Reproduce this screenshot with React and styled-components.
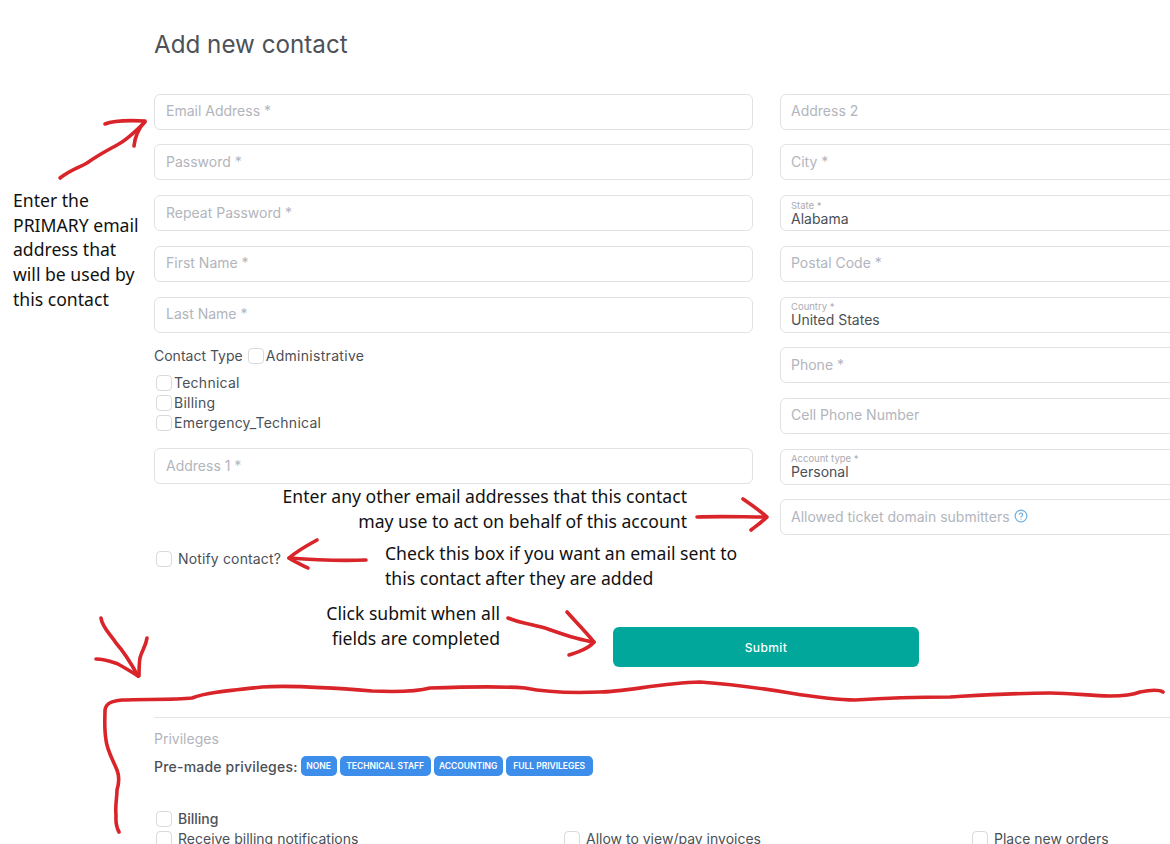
import React from 'react';
import styled, { createGlobalStyle } from 'styled-components';

const GlobalStyle = createGlobalStyle`
  html, body {
    margin: 0;
    padding: 0;
    overflow: hidden;
    background: #fff;
  }
`;

const Page = styled.div`
  position: relative;
  width: 1170px;
  height: 844px;
  overflow: hidden;
  font-family: Inter, Roboto, sans-serif;
  color: #4b5056;
`;

const Content = styled.div`
  width: 1224px;
  margin-left: 154px;
  padding-top: 30px;
`;

const Heading = styled.h1`
  margin: 0 0 33.8px;
  height: 30px;
  font-size: 24.2px;
  line-height: 30px;
  font-weight: 400;
  color: #4d5259;
`;

const FormGrid = styled.div`
  display: grid;
  grid-template-columns: 599px 599px;
  column-gap: 27px;
`;

const Column = styled.div`
  display: flex;
  flex-direction: column;
  gap: 14.7px;
`;

const Field = styled.div`
  box-sizing: border-box;
  height: 36px;
  padding: 0 10px 2px;
  border: 1px solid #e1e2e5;
  border-radius: 6px;
  display: flex;
  align-items: center;
  gap: 4px;
  font-size: 14px;
  color: #b2b5bc;
`;

const LeftField = styled(Field)`
  padding-left: 11px;
`;

const SelectField = styled(Field)`
  flex-direction: column;
  align-items: flex-start;
  justify-content: center;
  gap: 0;
  padding-bottom: 0;
`;

const SelectLabel = styled.span`
  font-size: 9.5px;
  line-height: 11px;
  color: #a9acb3;
`;

const SelectValue = styled.span`
  font-size: 14px;
  line-height: 16px;
  color: #4b5056;
`;

const HelpIcon = styled.svg`
  width: 14px;
  height: 14px;
  color: #6fb0e0;
`;

const Box = styled.span`
  box-sizing: border-box;
  flex: none;
  width: 16px;
  height: 16px;
  border: 1px solid #d9dadd;
  border-radius: 4px;
  background: #fff;
`;

const CheckRow = styled.label`
  display: flex;
  align-items: center;
  height: 20px;
  font-size: 14px;
  line-height: 20px;
  gap: 2px;
`;

const ContactTypes = styled.div`
  height: 88px;
  margin-top: -1.5px;
`;

const TypeTitle = styled.div`
  display: flex;
  align-items: center;
  gap: 2px;
  height: 20px;
  margin-bottom: 7px;
  font-size: 14px;
`;

const TypeTitleText = styled.span`
  margin-right: 3px;
`;

const AdminLabel = styled.span`
  letter-spacing: 0.3px;
`;

const TypeList = styled.div`
  padding-left: 2px;
  letter-spacing: 0.25px;
`;

const NotifyRow = styled(CheckRow)`
  margin-top: 50px;
  padding-left: 2px;
  gap: 6px;
  letter-spacing: 0.15px;
`;

const Actions = styled.div`
  display: flex;
  justify-content: center;
  margin-top: 58px;
`;

const SubmitButton = styled.button`
  width: 306px;
  height: 40px;
  border: 0;
  border-radius: 6px;
  background: #00a79a;
  color: #fff;
  font-family: inherit;
  font-size: 12px;
  font-weight: 500;
  letter-spacing: 0.4px;
`;

const Divider = styled.hr`
  height: 1px;
  margin: 50px 0 0;
  border: 0;
  background: #e4e5e7;
`;

const SectionLabel = styled.div`
  margin-top: 11px;
  height: 20px;
  font-size: 14px;
  line-height: 20px;
  color: #b2b5bc;
`;

const PresetRow = styled.div`
  display: flex;
  align-items: center;
  gap: 3px;
  height: 20px;
  margin-top: 7px;
`;

const PresetLabel = styled.span`
  font-size: 14px;
  font-weight: 500;
  letter-spacing: 0.2px;
  color: #4b5056;
`;

const Badge = styled.span`
  box-sizing: border-box;
  width: ${p => p.$w}px;
  height: 20px;
  border-radius: 5px;
  background: #3d8eea;
  color: #fff;
  font-size: 8.5px;
  line-height: 20px;
  font-weight: 600;
  text-align: center;
  white-space: nowrap;
`;

const PermGroupTitle = styled(CheckRow)`
  margin-top: 33px;
  padding-left: 2px;
  gap: 6px;
  font-weight: 500;
`;

const PermGrid = styled.div`
  display: grid;
  grid-template-columns: repeat(3, 408px);
  padding-left: 2px;
`;

const PermItem = styled(CheckRow)`
  gap: 6px;
`;

const Note = styled.div`
  position: absolute;
  left: ${p => p.$x}px;
  top: ${p => p.$y}px;
  width: ${p => p.$w}px;
  text-align: ${p => p.$align || 'left'};
  font-family: 'Noto Sans', 'Open Sans', sans-serif;
  font-size: 17.6px;
  line-height: 24.7px;
  color: #111;
  white-space: pre-line;
`;

const Scribbles = styled.svg`
  position: absolute;
  left: 0;
  top: 0;
  width: 1170px;
  height: 844px;
  pointer-events: none;
  fill: none;
  stroke: #d9242a;
  stroke-width: 3.6;
  stroke-linecap: round;
  stroke-linejoin: round;
`;

const leftFields = ['Email Address *', 'Password *', 'Repeat Password *', 'First Name *', 'Last Name *'];
const contactTypes = ['Technical', 'Billing', 'Emergency_Technical'];
const presets = [
  ['NONE', 36],
  ['TECHNICAL STAFF', 91],
  ['ACCOUNTING', 69],
  ['FULL PRIVILEGES', 87],
];
const billingPerms = ['Receive billing notifications', 'Allow to view/pay invoices', 'Place new orders'];

const strokes = [
  'M60 178 C70 170 78 168 87 163 C98 155 108 150 117 145 C125 141 135 132 145 122',
  'M105 124 C112 121 125 120 145 121 C139 128 135 136 134 146',
  'M366 560 C340 561 315 560 289 558',
  'M317 540 C306 546 297 551 289 558 C295 562 302 565 308 568',
  'M697 517 C720 516 745 517 766 517',
  'M743 499 C752 505 760 511 767 517 C762 522 756 526 751 530',
  'M508 618 C520 623 535 625 548 629 C562 634 578 640 594 642',
  'M567 612 C575 621 586 632 594 642 C588 649 578 652 569 655',
  'M101 618 C102 627 110 634 116 643 C124 652 132 665 138 676',
  'M96 659 C105 659 112 662 118 664 C125 668 132 672 138 676',
  'M147 638 C146 646 142 650 140 658 C139 664 139 670 139 676',
  'M119 832 C115 825 116 820 116 815 C115 805 117 798 117 790 C120 780 119 775 117 770 C112 758 107 750 106 740 C104 728 105 718 105 710 C106 703 112 701 122 700 C140 699 175 700 192 698 C205 693 225 691 262 687 C290 685 335 688 372 691 C395 692 415 692 430 688 C460 687 500 686 525 688 C545 692 575 693 600 692 C625 692 660 683 700 682 C730 684 760 688 790 693 C815 697 835 700 855 700 C885 698 920 697 950 697 C985 695 1015 693 1050 693 C1075 693 1090 696 1110 696 C1125 696 1135 694 1140 692 C1150 690 1158 689 1163 692',
];

function App() {
  return (
    <Page>
      <GlobalStyle />
      <Content>
        <Heading>Add new contact</Heading>
        <FormGrid>
          <Column>
            {leftFields.map(name => (
              <LeftField key={name}>{name}</LeftField>
            ))}
            <ContactTypes>
              <TypeTitle>
                <TypeTitleText>Contact Type</TypeTitleText>
                <Box />
                <AdminLabel>Administrative</AdminLabel>
              </TypeTitle>
              <TypeList>
                {contactTypes.map(name => (
                  <CheckRow key={name}>
                    <Box />
                    {name}
                  </CheckRow>
                ))}
              </TypeList>
            </ContactTypes>
            <LeftField>Address 1 *</LeftField>
            <NotifyRow>
              <Box />
              Notify contact?
            </NotifyRow>
          </Column>
          <Column>
            <Field>Address 2</Field>
            <Field>City *</Field>
            <SelectField>
              <SelectLabel>State *</SelectLabel>
              <SelectValue>Alabama</SelectValue>
            </SelectField>
            <Field>Postal Code *</Field>
            <SelectField>
              <SelectLabel>Country *</SelectLabel>
              <SelectValue>United States</SelectValue>
            </SelectField>
            <Field>Phone *</Field>
            <Field>Cell Phone Number</Field>
            <SelectField>
              <SelectLabel>Account type *</SelectLabel>
              <SelectValue>Personal</SelectValue>
            </SelectField>
            <Field>
              Allowed ticket domain submitters
              <HelpIcon viewBox="0 0 24 24" fill="none" stroke="currentColor" strokeWidth="2">
                <circle cx="12" cy="12" r="10" />
                <path d="M9 9a3 3 0 0 1 5.8 1c0 2-2.8 2.4-2.8 4" strokeLinecap="round" />
                <path d="M12 17.5h.01" strokeLinecap="round" />
              </HelpIcon>
            </Field>
          </Column>
        </FormGrid>
        <Actions>
          <SubmitButton>Submit</SubmitButton>
        </Actions>
        <Divider />
        <SectionLabel>Privileges</SectionLabel>
        <PresetRow>
          <PresetLabel>Pre-made privileges:</PresetLabel>
          {presets.map(([name, w]) => (
            <Badge key={name} $w={w}>{name}</Badge>
          ))}
        </PresetRow>
        <PermGroupTitle>
          <Box />
          Billing
        </PermGroupTitle>
        <PermGrid>
          {billingPerms.map(name => (
            <PermItem key={name}>
              <Box />
              {name}
            </PermItem>
          ))}
        </PermGrid>
      </Content>

      <Note $x={13} $y={188} $w={135}>
        {'Enter the\nPRIMARY email\naddress that\nwill be used by\nthis contact'}
      </Note>
      <Note $x={240} $y={484} $w={447} $align="right">
        {'Enter any other email addresses that this contact\nmay use to act on behalf of this account'}
      </Note>
      <Note $x={385} $y={541} $w={400}>
        {'Check this box if you want an email sent to\nthis contact after they are added'}
      </Note>
      <Note $x={280} $y={601} $w={220} $align="right">
        {'Click submit when all\nfields are completed'}
      </Note>

      <Scribbles viewBox="0 0 1170 844">
        {strokes.map((d, i) => (
          <path key={i} d={d} />
        ))}
      </Scribbles>
    </Page>
  );
}

export default App;
